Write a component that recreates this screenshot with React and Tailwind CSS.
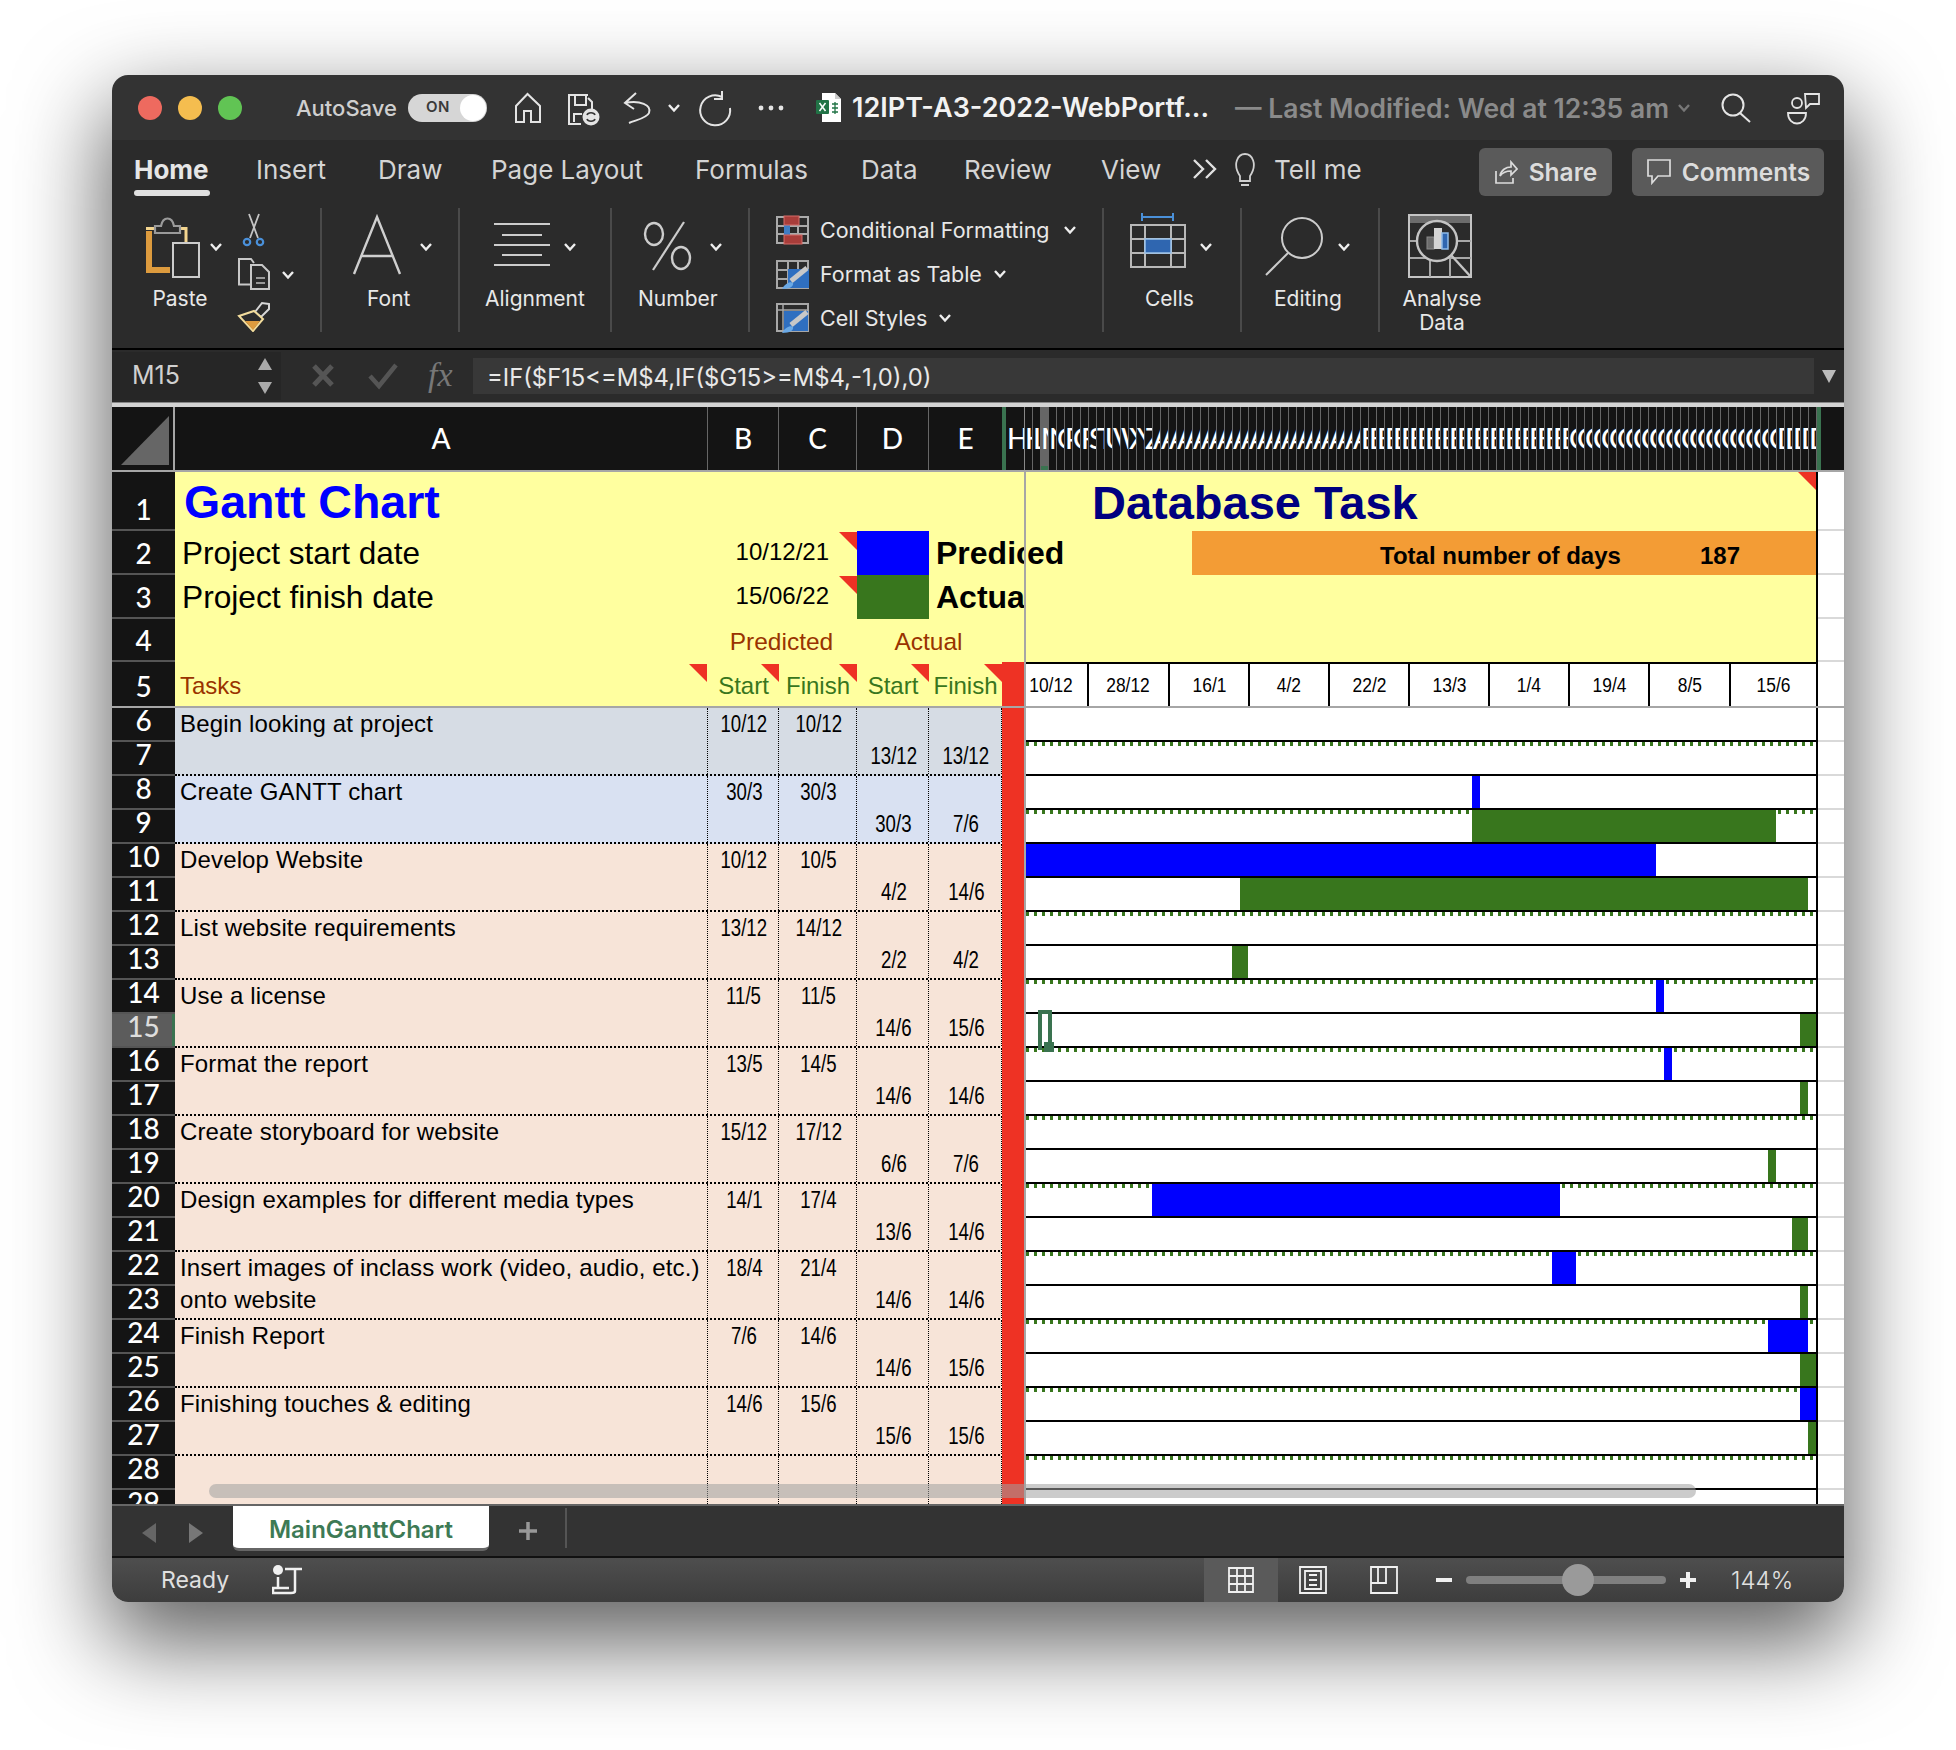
import React from "react";

const letters = "ABCDEFGHIJKLMNOPQRSTUVWXYZ".split("");
const gridCols = [
  ...letters.slice(10),
  ...letters.map((l) => "A" + l),
  ...letters.map((l) => "B" + l),
  ...letters.map((l) => "C" + l),
  "DA", "DB", "DC", "DD", "DE",
];

const B = "#0000ff";
const G = "#38761d";
const bars = {
  8: [B, 1472, 1480],
  9: [G, 1472, 1776],
  10: [B, 1026, 1656],
  11: [G, 1240, 1808],
  13: [G, 1232, 1248],
  14: [B, 1656, 1664],
  15: [G, 1800, 1816],
  16: [B, 1664, 1672],
  17: [G, 1800, 1808],
  19: [G, 1768, 1776],
  20: [B, 1152, 1560],
  21: [G, 1792, 1808],
  22: [B, 1552, 1576],
  23: [G, 1800, 1808],
  24: [B, 1768, 1808],
  25: [G, 1800, 1816],
  26: [B, 1800, 1816],
  27: [G, 1808, 1816],
};
const ticked = [7, 9, 12, 14, 16, 18, 20, 22, 24, 26, 28];

const tasks = [
  { r: 6, bg: "bg-[#d6dce4]", t: "Begin looking at project", v: ["10/12", "10/12", "13/12", "13/12"] },
  { r: 8, bg: "bg-[#d9e1f2]", t: "Create GANTT chart", v: ["30/3", "30/3", "30/3", "7/6"] },
  { r: 10, bg: "bg-[#f7e4d8]", t: "Develop Website", v: ["10/12", "10/5", "4/2", "14/6"] },
  { r: 12, bg: "bg-[#f7e4d8]", t: "List website requirements", v: ["13/12", "14/12", "2/2", "4/2"] },
  { r: 14, bg: "bg-[#f7e4d8]", t: "Use a license", v: ["11/5", "11/5", "14/6", "15/6"] },
  { r: 16, bg: "bg-[#f7e4d8]", t: "Format the report", v: ["13/5", "14/5", "14/6", "14/6"] },
  { r: 18, bg: "bg-[#f7e4d8]", t: "Create storyboard for website", v: ["15/12", "17/12", "6/6", "7/6"] },
  { r: 20, bg: "bg-[#f7e4d8]", t: "Design examples for different media types", v: ["14/1", "17/4", "13/6", "14/6"] },
  { r: 22, bg: "bg-[#f7e4d8]", t: "Insert images of inclass work (video, audio, etc.) onto website", v: ["18/4", "21/4", "14/6", "14/6"] },
  { r: 24, bg: "bg-[#f7e4d8]", t: "Finish Report", v: ["7/6", "14/6", "14/6", "15/6"] },
  { r: 26, bg: "bg-[#f7e4d8]", t: "Finishing touches & editing", v: ["14/6", "15/6", "15/6", "15/6"] },
  { r: 28, bg: "bg-[#f7e4d8]", t: "", v: ["", "", "", ""] },
];

const Chev = ({ x, y, c = "#eeeeee" }) => (
  <path d={`M${x - 5} ${y - 3}L${x} ${y + 2.5}L${x + 5} ${y - 3}`} fill="none" stroke={c} strokeWidth="2.4" />
);

function Note({ className = "" }) {
  return <div className={`absolute w-[18px] h-[18px] bg-[#ee3224] [clip-path:polygon(0_0,100%_0,100%_100%)] ${className}`} />;
}

function RowHead({ n, h = "h-[34px]" }) {
  const sel = n === 15;
  return (
    <div className={`${h} w-[63px] shrink-0 flex items-end justify-center border-b-2 border-[#555555] relative ${sel ? "bg-[#5c5c5c] text-[#dddddd]" : "bg-[#141414] text-white"}`}>
      <span className="font-['Lato',sans-serif] text-[28px] font-medium leading-[40px] h-[40px] shrink-0">{n}</span>
      {sel && <div className="absolute right-0 top-0 bottom-0 w-[3px] bg-[#3a7350]" />}
    </div>
  );
}

function ChartRow({ n }) {
  const b = bars[n];
  const tick = ticked.includes(n);
  return (
    <div className="flex h-[34px]">
      <div className={`w-[792px] h-full flex border-b-2 border-r-2 border-r-black border-b-black ${tick ? "bg-[linear-gradient(90deg,#38761d_40%,transparent_40%)] bg-[length:8px_4px] bg-repeat-x" : ""}`}>
        {b && <div className="h-full" style={{ marginLeft: b[1] - 1026, width: b[2] - b[1], backgroundColor: b[0] }} />}
      </div>
      <div className="w-[26px] h-full border-b-2 border-[#d9d9d9]" />
    </div>
  );
}

function Date1({ v, w, bottom }) {
  return (
    <div className={`${w} h-full flex justify-center pl-[2px] border-r border-dotted border-black ${bottom ? "items-end pb-[3px]" : "items-start pt-[1px]"}`}>
      <span className="inline-block text-[23px] leading-[30px] scale-x-[0.81] text-black whitespace-nowrap">{v}</span>
    </div>
  );
}

function TaskGroup({ g }) {
  return (
    <div className="flex h-[68px] shrink-0">
      <div className="flex flex-col">
        <RowHead n={g.r} />
        <RowHead n={g.r + 1} />
      </div>
      <div className={`flex w-[849px] h-[68px] ${g.bg} border-b-2 border-dotted border-black`}>
        <div className="w-[533px] h-full pl-[5px] pr-[4px] border-r border-dotted border-black text-[24px] leading-[32px] text-black tracking-[0.15px]">{g.t}</div>
        <Date1 v={g.v[0]} w="w-[71px]" />
        <Date1 v={g.v[1]} w="w-[78px]" />
        <Date1 v={g.v[2]} w="w-[72px]" bottom />
        <Date1 v={g.v[3]} w="w-[73px]" bottom />
        <div className="w-[22px] h-[68px] bg-[#ee3224]" />
      </div>
      <div className="w-[2px] h-full bg-[#a6a6a6]" />
      <div className="flex flex-col">
        <ChartRow n={g.r} />
        <ChartRow n={g.r + 1} />
      </div>
    </div>
  );
}

function TopRow({ n, h, headH, left, right }) {
  return (
    <div className={`flex ${h} shrink-0`}>
      <RowHead n={n} h={headH} />
      <div className="w-[849px] h-full flex bg-[#ffff9f] relative">{left}</div>
      <div className="w-[2px] h-full bg-[#a6a6a6]" />
      <div className="w-[792px] h-full bg-[#ffff9f] border-r-2 border-black flex relative">{right}</div>
      <div className="w-[26px] h-full bg-white border-b-2 border-[#d9d9d9]" />
    </div>
  );
}

const chartDates = [
  ["10/12", "w-[63px] justify-start"],
  ["28/12", "w-[81px] justify-center"],
  ["16/1", "w-[80px] justify-center"],
  ["4/2", "w-[80px] justify-center"],
  ["22/2", "w-[80px] justify-center"],
  ["13/3", "w-[80px] justify-center"],
  ["1/4", "w-[80px] justify-center"],
  ["19/4", "w-[80px] justify-center"],
  ["8/5", "w-[81px] justify-center"],
  ["15/6", "flex-1 justify-center"],
];

function Sheet() {
  return (
    <div className="relative h-[1097px] overflow-hidden bg-white flex flex-col font-['Liberation_Sans',Arial,sans-serif]">
      {/* column header */}
      <div className="flex h-[65px] shrink-0 bg-[#141414] border-b-2 border-[#a6a6a6] text-white font-['Lato',sans-serif] text-[28px] leading-[63px] font-medium">
        <div className="w-[63px] h-full relative border-r-2 border-[#a6a6a6]">
          <div className="absolute left-[9px] top-[9px] w-[48px] h-[49px] bg-[#666666] [clip-path:polygon(100%_0,100%_100%,0_100%)]" />
        </div>
        <div className="w-[533px] text-center border-r border-[#666666]">A</div>
        <div className="w-[71px] text-center border-r border-[#666666]">B</div>
        <div className="w-[78px] text-center border-r border-[#666666]">C</div>
        <div className="w-[72px] text-center border-r border-[#666666]">D</div>
        <div className="w-[73px] text-center">E</div>
        <div className="w-[22px] border-l-[4px] border-[#3a7350] pl-[1px] overflow-hidden leading-[63px]">H</div>
        <div className="flex h-[63px] border-l border-[#888888]">
          {gridCols.map((c) => (
            <div key={c} className={`relative w-[8px] h-full overflow-hidden whitespace-nowrap border-r border-[#666666] ${c === "M" ? "bg-[#666666]" : ""}`}>
              {c}
              {c === "M" && <div className="absolute left-0 right-0 bottom-0 h-[4px] bg-[#3a7350]" />}
            </div>
          ))}
        </div>
        <div className="w-[4px] h-[63px] bg-[#3a7350]" />
      </div>

      <TopRow
        n={1}
        h="h-[59px]"
        headH="h-[59px]"
        left={<div className="pl-[9px] text-[46.5px] font-bold leading-[61px] text-[#0000ff] whitespace-nowrap">Gantt Chart</div>}
        right={
          <>
            <div className="pl-[66px] text-[47px] font-bold leading-[61px] text-[#000080] whitespace-nowrap">Database Task</div>
            <Note className="right-0 top-0" />
          </>
        }
      />
      <TopRow
        n={2}
        h="h-[44px]"
        headH="h-[44px]"
        left={
          <>
            <div className="w-[533px] pl-[7px] text-[31.5px] leading-[44px] text-black whitespace-nowrap">Project start date</div>
            <div className="w-[149px] relative pr-[28px] text-right text-[24px] leading-[42px] text-black">
              10/12/21
              <Note className="right-0 top-[1px]" />
            </div>
            <div className="w-[72px] h-full bg-[#0000ff]" />
            <div className="w-[95px] pl-[7px] text-[32px] font-bold leading-[44px] text-black overflow-hidden whitespace-nowrap">Predicted</div>
          </>
        }
        right={
          <>
            <div className="w-[166px] pl-[1px] text-[32px] font-bold leading-[44px] text-black">ed</div>
            <div className="flex-1 h-full bg-[#f39c35] flex text-[24px] font-bold leading-[46px] pt-[2px] text-black">
              <div className="w-[320px] ml-[188px] whitespace-nowrap">Total number of days</div>
              <div>187</div>
            </div>
          </>
        }
      />
      <TopRow
        n={3}
        h="h-[44px]"
        headH="h-[44px]"
        left={
          <>
            <div className="w-[533px] pl-[7px] text-[31.7px] leading-[44px] text-black whitespace-nowrap">Project finish date</div>
            <div className="w-[149px] relative pr-[28px] text-right text-[24px] leading-[42px] text-black">
              15/06/22
              <Note className="right-0 top-[1px]" />
            </div>
            <div className="w-[72px] h-full bg-[#38761d]" />
            <div className="w-[95px] pl-[7px] text-[32px] font-bold leading-[44px] text-black overflow-hidden whitespace-nowrap">Actual</div>
          </>
        }
      />
      <TopRow
        n={4}
        h="h-[43px]"
        headH="h-[43px]"
        left={
          <div className="flex text-[24.5px] leading-[45px] text-[#993300] h-full">
            <div className="w-[533px]" />
            <div className="w-[147px] text-center">Predicted</div>
            <div className="w-[147px] text-center">Actual</div>
          </div>
        }
      />
      <div className="flex h-[46px] shrink-0 border-b-2 border-[#a6a6a6]">
        <div className="w-[63px] h-[44px] shrink-0 flex items-end justify-center bg-[#141414] text-white">
          <span className="font-['Lato',sans-serif] text-[28px] font-medium leading-[40px]">5</span>
        </div>
        <div className="w-[849px] h-[44px] flex bg-[#ffff9f] relative text-[24px] leading-[48px] text-[#38761d]">
          <div className="w-[533px] pl-[5px] relative text-[#993300]">
            Tasks
            <Note className="right-[1px] top-[2px]" />
          </div>
          <div className="w-[71px] relative text-center">
            Start
            <Note className="right-0 top-[2px]" />
          </div>
          <div className="w-[78px] relative text-center">
            Finish
            <Note className="right-0 top-[2px]" />
          </div>
          <div className="w-[72px] relative text-center">
            Start
            <Note className="right-0 top-[2px]" />
          </div>
          <div className="w-[73px] relative text-center whitespace-nowrap">
            Finish
            <Note className="right-0 top-[2px]" />
          </div>
          <div className="w-[22px] h-full bg-[#ee3224]" />
        </div>
        <div className="w-[2px] h-[44px] bg-[#a6a6a6]" />
        <div className="w-[792px] h-[44px] flex border-t-2 border-r-2 border-black bg-white text-[20px] leading-[42px] text-black">
          {chartDates.map(([d, c], i) => (
            <div key={d} className={`${c} h-full flex ${i < 9 ? "border-r-2 border-black" : ""}`}>
              <span className="inline-block scale-x-[0.87]">{d}</span>
            </div>
          ))}
        </div>
        <div className="w-[26px] h-[44px]" />
      </div>

      {tasks.map((g) => (
        <TaskGroup key={g.r} g={g} />
      ))}

      {/* selected cell M15 */}
      <div className="absolute left-[926px] top-[603px] w-[14px] h-[40px] border-t-4 border-l-4 border-r-4 border-[#3a7350]" />
      <div className="absolute left-[932px] top-[635px] w-[10px] h-[10px] bg-[#3a7350]" />
      {/* scrollbar */}
      <div className="absolute left-[97px] top-[1077px] w-[1487px] h-[14px] rounded-full bg-[rgba(160,160,160,0.55)]" />
    </div>
  );
}

function Ribbon() {
  const label = "text-[21px] leading-[24px] text-[#e8e8e8] whitespace-nowrap";
  const sep = "h-[124px] mt-[8px] border-r-2 border-[#4a4a4a] shrink-0";
  return (
    <div className="h-[148px] flex bg-[#2b2b2b]">
      {/* clipboard */}
      <div className={`${sep} w-[210px] flex pl-[26px]`}>
        <div className="w-[84px] flex flex-col items-center">
          <svg className="shrink-0 mb-[1px]" width="84" height="78" viewBox="138 208 84 78">
            <path d="M149 231V270H170" fill="none" stroke="#dd9b3e" strokeWidth="6" />
            <path d="M146 228.5H186V243" fill="none" stroke="#f4d58f" strokeWidth="3" />
            <path d="M155 233V226H161C163 216 172 216 174 226H180V233Z" fill="#2b2b2b" stroke="#9a9a9a" strokeWidth="2.2" />
            <rect x="173" y="243" width="26" height="34" fill="#2b2b2b" stroke="#cccccc" strokeWidth="2" />
            <Chev x={216} y={247} />
          </svg>
          <span className={label}>Paste</span>
        </div>
        <svg className="shrink-0" width="98" height="124" viewBox="222 208 98 124">
          <path d="M249 214L258 238M259 214L250 238" stroke="#c4c4c4" strokeWidth="1.8" fill="none" />
          <circle cx="247" cy="242" r="3.2" fill="none" stroke="#4a90d9" strokeWidth="2.2" />
          <circle cx="260" cy="242" r="3.2" fill="none" stroke="#4a90d9" strokeWidth="2.2" />
          <path d="M250 284.500H239V259H251L254 263" fill="none" stroke="#c8c8c8" strokeWidth="2" />
          <path d="M251 265H262L269 272V289H251Z" fill="none" stroke="#c8c8c8" strokeWidth="2" />
          <path d="M256 278H265M256 283H265" stroke="#999999" strokeWidth="1.8" />
          <Chev x={288} y={275} />
          <path d="M269 304L262 303L255 312L261 317L269 309Z" fill="none" stroke="#d8d8d8" strokeWidth="2" />
          <path d="M239 316L254 311L263 319L253 331Z" fill="#2b2b2b" stroke="#f2dc9c" strokeWidth="2" />
          <path d="M245 321L260 321L253 330Z" fill="#dd9b3e" />
        </svg>
      </div>
      {/* font */}
      <div className={`${sep} w-[138px] flex flex-col items-start`}>
        <svg className="shrink-0 mb-[1px]" width="136" height="78" viewBox="322 208 136 78">
          <path d="M354 274L377 217L400 274M362 256H392" fill="none" stroke="#cfcfcf" strokeWidth="2.4" />
          <Chev x={426} y={247} />
        </svg>
        <span className={`${label} pl-[45px]`}>Font</span>
      </div>
      {/* alignment */}
      <div className={`${sep} w-[152px] flex flex-col`}>
        <svg className="shrink-0 mb-[1px]" width="150" height="78" viewBox="460 208 150 78">
          <path d="M494 224H550M502 235H542M494 245H550M502 255H542M494 265H550" stroke="#cccccc" strokeWidth="2" fill="none" />
          <Chev x={570} y={247} />
        </svg>
        <span className={`${label} pl-[25px]`}>Alignment</span>
      </div>
      {/* number */}
      <div className={`${sep} w-[138px] flex flex-col`}>
        <svg className="shrink-0 mb-[1px]" width="136" height="78" viewBox="612 208 136 78">
          <ellipse cx="654" cy="234" rx="9" ry="11" fill="none" stroke="#cccccc" strokeWidth="2.4" />
          <ellipse cx="681" cy="258" rx="9" ry="11" fill="none" stroke="#cccccc" strokeWidth="2.4" />
          <path d="M684 222L653 270" stroke="#cccccc" strokeWidth="2.2" />
          <Chev x={716} y={247} />
        </svg>
        <span className={`${label} pl-[26px]`}>Number</span>
      </div>
      {/* styles */}
      <div className={`${sep} w-[354px] flex flex-col text-[21.5px] text-[#e8e8e8]`}>
        <div className="h-[44px] shrink-0 flex items-center pl-[26px] gap-[11px]">
          <svg className="shrink-0" width="33" height="30" viewBox="775 215 33 30">
            <path d="M776 217H807V243H776ZM787 217V243M797 217V243M776 226H807M776 234H807" fill="none" stroke="#aaaaaa" strokeWidth="2" />
            <rect x="783" y="232" width="6" height="4" fill="#3f6fb5" />
            <rect x="783" y="224" width="6" height="10" fill="#3f7dc4" />
            <rect x="783" y="216" width="15" height="9" fill="#a83d3a" stroke="#d56c68" />
            <rect x="783" y="235" width="18" height="9" fill="#a83d3a" stroke="#d56c68" />
          </svg>
          <span className="whitespace-nowrap">Conditional Formatting</span>
          <svg className="ml-[2px]" width="14" height="10" viewBox="1062 225 14 10"><Chev x={1069} y={230} /></svg>
        </div>
        <div className="h-[44px] shrink-0 flex items-center pl-[26px] gap-[11px]">
          <svg className="shrink-0" width="33" height="30" viewBox="775 259 33 30">
            <path d="M776 261H807V288H776ZM787 261V288M797 261V288M776 270H807M776 279H807" fill="none" stroke="#a8a8a8" strokeWidth="2" />
            <rect x="787" y="269" width="21" height="19" fill="#2f6fc0" />
            <path d="M806 268L790 281" stroke="#c8c8c8" strokeWidth="5" />
            <path d="M781 289C784 283 790 281 792 283C793 286 789 289 781 289Z" fill="#6aa9e6" />
          </svg>
          <span className="whitespace-nowrap">Format as Table</span>
          <svg width="14" height="10" viewBox="992 269 14 10"><Chev x={999} y={274} /></svg>
        </div>
        <div className="h-[44px] shrink-0 flex items-center pl-[26px] gap-[11px]">
          <svg className="shrink-0" width="33" height="30" viewBox="775 303 33 30">
            <path d="M776 304H807V331H776Z" fill="none" stroke="#a8a8a8" strokeWidth="2" />
            <path d="M776 310H807M782 304V331" stroke="#a8a8a8" strokeWidth="1.5" />
            <rect x="783" y="311" width="24" height="20" fill="#2f6fc0" />
            <path d="M806 312L790 325" stroke="#c8c8c8" strokeWidth="5" />
            <path d="M781 333C784 327 790 325 792 327C793 330 789 333 781 333Z" fill="#6aa9e6" />
          </svg>
          <span className="whitespace-nowrap">Cell Styles</span>
          <svg width="14" height="10" viewBox="938 313 14 10"><Chev x={945} y={318} /></svg>
        </div>
      </div>
      {/* cells */}
      <div className={`${sep} w-[138px] flex flex-col`}>
        <svg className="shrink-0 mb-[1px]" width="136" height="78" viewBox="1105 208 136 78">
          <path d="M1143 217H1174M1143 213V221M1174 213V221" stroke="#4a90d9" strokeWidth="2" fill="none" />
          <path d="M1132 225H1186V267H1132ZM1146 225V267M1172 225V267M1132 239H1186M1132 253H1186" fill="none" stroke="#b8b8b8" strokeWidth="2" />
          <rect x="1146" y="239" width="26" height="14" fill="#2f66b0" stroke="#9cc3ea" strokeWidth="1.5" />
          <Chev x={1207} y={247} />
        </svg>
        <span className={`${label} pl-[41px]`}>Cells</span>
      </div>
      {/* editing */}
      <div className={`${sep} w-[138px] flex flex-col`}>
        <svg className="shrink-0 mb-[1px]" width="136" height="78" viewBox="1243 208 136 78">
          <circle cx="1303" cy="238" r="20" fill="none" stroke="#cccccc" strokeWidth="2" />
          <path d="M1289 253L1267 275" stroke="#cccccc" strokeWidth="2" />
          <Chev x={1345} y={247} />
        </svg>
        <span className={`${label} pl-[32px]`}>Editing</span>
      </div>
      {/* analyse */}
      <div className="w-[130px] mt-[8px] flex flex-col">
        <svg className="shrink-0 mb-[1px]" width="130" height="78" viewBox="1381 208 130 78">
          <rect x="1410" y="215" width="62" height="62" fill="none" stroke="#c4c4c4" strokeWidth="2" />
          <rect x="1411" y="216" width="60" height="7" fill="#6c6c6c" />
          <path d="M1411 241H1472M1411 258H1472M1431 258V277M1451 258V277" stroke="#a8a8a8" strokeWidth="2" />
          <circle cx="1438" cy="241" r="20" fill="#2b2b2b" stroke="#c4c4c4" strokeWidth="2.4" />
          <rect x="1428" y="237" width="7" height="12" fill="#6c6c6c" stroke="#8a8a8a" />
          <rect x="1435" y="228" width="8" height="21" fill="#d4d4d4" />
          <rect x="1443" y="233" width="6" height="16" fill="#2f66b0" stroke="#8fbbe8" strokeWidth="1.5" />
          <path d="M1452 255L1472 277" stroke="#c4c4c4" strokeWidth="2.4" />
        </svg>
        <div className="w-[124px] text-center">
          <span className={`${label} block`}>Analyse</span>
          <span className={`${label} block`}>Data</span>
        </div>
      </div>
    </div>
  );
}

export default function App() {
  return (
    <div className="w-[1956px] h-[1750px] bg-white pt-[75px] pl-[112px] overflow-hidden font-['Inter',sans-serif]">
      <div className="w-[1732px] h-[1527px] rounded-[16px] overflow-hidden flex flex-col shadow-[0_36px_90px_6px_rgba(0,0,0,0.62)]">
        {/* title bar */}
        <div className="h-[65px] shrink-0 bg-[#333333] flex items-center pl-[26px] text-[#cfcfcf]">
          <div className="flex gap-[16px] shrink-0">
            <div className="w-[24px] h-[24px] rounded-full bg-[#ee6a5f]" />
            <div className="w-[24px] h-[24px] rounded-full bg-[#f5bd4f]" />
            <div className="w-[24px] h-[24px] rounded-full bg-[#61c454]" />
          </div>
          <span className="ml-[54px] w-[100px] pt-[2px] text-[22px] font-medium whitespace-nowrap">AutoSave</span>
          <div className="ml-[12px] w-[79px] h-[28px] rounded-full bg-[#d6d6d6] flex items-center justify-between pl-[18px] pr-[1px]">
            <span className="text-[15px] font-semibold text-[#3a3a3a] tracking-[0.5px]">ON</span>
            <div className="w-[26px] h-[26px] rounded-full bg-white" />
          </div>
          <svg className="ml-[18px] shrink-0" width="300" height="40" viewBox="505 88 300 40">
            <path d="M516 122V106L527.500 94L540 106V122H531V111H524V122Z" fill="none" stroke="#e4e4e4" strokeWidth="2" />
            <path d="M588 98L592 102V110M581 124H569V95H588M575 95V105H586V95M574 122V114H582" fill="none" stroke="#e4e4e4" strokeWidth="2" />
            <circle cx="591" cy="117" r="8.500" fill="#e4e4e4" />
            <path d="M587 115C588 112 594 112 595 115M595 119C594 122 588 122 587 119" fill="none" stroke="#333333" strokeWidth="1.600" />
            <path d="M636 93L625 103L634 109M625 103C640 100 652 105 649 113C647 118 636 120 629 123" fill="none" stroke="#e4e4e4" strokeWidth="2" />
            <Chev x={674} y={108} />
            <path d="M722 97A15 15 0 1 0 730 108M722 91V99H714" fill="none" stroke="#e4e4e4" strokeWidth="2" />
            <circle cx="761" cy="108" r="2.400" fill="#e4e4e4" />
            <circle cx="771" cy="108" r="2.400" fill="#e4e4e4" />
            <circle cx="781" cy="108" r="2.400" fill="#e4e4e4" />
          </svg>
          <svg className="ml-[11px] shrink-0" width="26" height="30" viewBox="816 93 26 30">
            <path d="M822 93H835L841 99V122H822Z" fill="#ffffff" />
            <path d="M835 93V99H841" fill="#cccccc" />
            <rect x="816" y="100" width="13" height="14" rx="1" fill="#217346" />
            <path d="M819.500 103L825.500 111M825.500 103L819.500 111" stroke="#ffffff" strokeWidth="1.500" />
            <path d="M832 104H838M832 108H838M832 112H838M835 102V114" stroke="#217346" strokeWidth="1.300" />
          </svg>
          <span className="ml-[10px] w-[383px] pt-[2px] text-[27px] font-semibold text-[#f2f2f2] whitespace-nowrap">12IPT-A3-2022-WebPortf...</span>
          <span className="w-[445px] pt-[2px] text-[26.5px] font-semibold text-[#8a8a8a] whitespace-nowrap">— Last Modified: Wed at 12:35 am</span>
          <svg className="shrink-0 -ml-[8px]" width="150" height="40" viewBox="1672 88 150 40">
            <Chev x={1684} y={108} c="#777777" />
            <circle cx="1733" cy="105" r="10.500" fill="none" stroke="#e4e4e4" strokeWidth="2" />
            <path d="M1740 113L1750 122" stroke="#e4e4e4" strokeWidth="2" />
            <path d="M1805 94H1819V104H1810L1806 108Z" fill="none" stroke="#e4e4e4" strokeWidth="1.800" />
            <circle cx="1797" cy="103" r="5" fill="none" stroke="#e4e4e4" strokeWidth="1.800" />
            <path d="M1788 113H1806C1806 127 1788 127 1788 113Z" fill="none" stroke="#e4e4e4" strokeWidth="1.800" />
          </svg>
        </div>

        {/* tabs */}
        <div className="h-[60px] shrink-0 bg-[#2b2b2b] flex items-start pl-[22px] pr-[20px] text-[26px] leading-[60px] text-[#d4d4d4]">
          <div className="w-[122px] relative font-bold text-[#e6e6e6]">
            Home
            <div className="absolute left-0 top-[50px] w-[76px] h-[6px] rounded-full bg-[#e0e0e0]" />
          </div>
          <div className="w-[122px]">Insert</div>
          <div className="w-[113px]">Draw</div>
          <div className="w-[204px]">Page Layout</div>
          <div className="w-[166px]">Formulas</div>
          <div className="w-[103px]">Data</div>
          <div className="w-[137px]">Review</div>
          <div className="w-[92px]">View</div>
          <svg className="mt-[18px]" width="41" height="24" viewBox="1193 157 41 24">
            <path d="M1194 159L1203 168L1194 177M1206 159L1215 168L1206 177" fill="none" stroke="#e0e0e0" strokeWidth="2.400" />
          </svg>
          <svg className="mt-[13px]" width="40" height="34" viewBox="1234 152 40 34">
            <path d="M1240 180V175C1232 163 1238 153 1245 153C1252 153 1258 163 1250 175V180Z" fill="none" stroke="#d0d0d0" strokeWidth="1.800" />
            <path d="M1241 184H1249" stroke="#d0d0d0" strokeWidth="2.200" />
          </svg>
          <div>Tell me</div>
          <div className="ml-auto mt-[8px] flex gap-[20px] text-[24.5px] leading-[50px] font-semibold text-[#dcdcdc]">
            <div className="w-[133px] h-[48px] rounded-[6px] bg-[#5a5a5a] flex items-center justify-center gap-[11px]">
              <svg width="24" height="26" viewBox="0 0 24 26">
                <path d="M2 12V24H19V19M6 17C7 11 12 8 17 8V3L23 10L17 16V12C12 12 9 13 6 17Z" fill="none" stroke="#dcdcdc" strokeWidth="1.700" />
              </svg>
              <span>Share</span>
            </div>
            <div className="w-[192px] h-[48px] rounded-[6px] bg-[#5a5a5a] flex items-center justify-center gap-[10px]">
              <svg width="26" height="28" viewBox="0 0 26 28">
                <path d="M2 2H24V18H12L6 25V18H2Z" fill="none" stroke="#dcdcdc" strokeWidth="1.700" />
              </svg>
              <span>Comments</span>
            </div>
          </div>
        </div>

        <Ribbon />

        <div className="h-[2px] shrink-0 bg-black" />

        {/* formula bar */}
        <div className="h-[52px] shrink-0 bg-[#2b2b2b] flex items-stretch text-[24px]">
          <div className="w-[169px] my-[2px] bg-[#262626] flex items-center pl-[20px] pr-[8px] justify-between text-[#d0d0d0]">
            <span className="text-[25px]">M15</span>
            <svg width="16" height="38" viewBox="0 0 16 38">
              <path d="M8 1L15 13H1Z" fill="#aaaaaa" />
              <path d="M8 37L15 25H1Z" fill="#aaaaaa" />
            </svg>
          </div>
          <svg className="shrink-0" width="192" height="52" viewBox="281 350 192 52">
            <path d="M314 366L332 385M332 366L314 385" stroke="#555555" strokeWidth="5" />
            <path d="M370 376L379 386L396 365" fill="none" stroke="#555555" strokeWidth="4.500" />
            <text x="428" y="386" fontFamily="'Liberation Serif',serif" fontStyle="italic" fontSize="34" fill="#777777">fx</text>
          </svg>
          <div className="my-[8px] w-[1341px] bg-[#383838] pl-[14px] text-[23.8px] leading-[39px] text-[#e8e8e8] whitespace-nowrap">
            =IF($F15&lt;=M$4,IF($G15&gt;=M$4,-1,0),0)
          </div>
          <svg className="ml-[8px] mt-[20px]" width="14" height="13" viewBox="0 0 14 13">
            <path d="M0 0H14L7 13Z" fill="#bbbbbb" />
          </svg>
        </div>

        <div className="h-[5px] shrink-0 bg-[#d4d4d4] border-t border-[#888888]" />

        <Sheet />

        {/* sheet tabs */}
        <div className="h-[52px] shrink-0 bg-[#333333] border-t-2 border-[#666666] flex items-start">
          <svg className="ml-[30px] mt-[17px] shrink-0" width="62" height="20" viewBox="142 1523 62 20">
            <path d="M156 1523V1543L142 1533Z" fill="#666666" />
            <path d="M189 1523V1543L203 1533Z" fill="#777777" />
          </svg>
          <div className="ml-[29px] w-[256px] h-[45px] bg-white rounded-b-[6px] border-b-[3px] border-[#666666] text-center text-[24px] font-semibold leading-[47px] text-[#3d7a55]">
            MainGanttChart
          </div>
          <svg className="ml-[28px] mt-[14px] shrink-0" width="22" height="22" viewBox="0 0 22 22">
            <path d="M11 2V20M2 11H20" stroke="#999999" strokeWidth="3.500" />
          </svg>
          <div className="ml-[26px] mt-[2px] w-[2px] h-[40px] bg-[#555555]" />
        </div>

        {/* status bar */}
        <div className="h-[46px] shrink-0 bg-[linear-gradient(#4e4e4e,#3d3d3d)] border-t-2 border-[#111111] flex items-center pl-[49px] text-[#e0e0e0]">
          <span className="w-[111px] pt-[1px] text-[23px] whitespace-nowrap">Ready</span>
          <svg className="shrink-0" width="32" height="30" viewBox="271 1564 32 30">
            <circle cx="277" cy="1569" r="5" fill="#f0f0f0" />
            <path d="M277 1576V1587M284 1568H301M294 1568V1590Q294 1592 290 1592H272V1587H288" fill="none" stroke="#f0f0f0" strokeWidth="2.500" />
          </svg>
          <div className="ml-[900px] w-[74px] h-[44px] bg-[#5a5a5a] flex items-center justify-center">
            <svg width="26" height="26" viewBox="0 0 26 26">
              <path d="M1 1H25V25H1ZM9 1V25M17 1V25M1 9H25M1 17H25" fill="none" stroke="#f0f0f0" strokeWidth="1.800" />
            </svg>
          </div>
          <svg className="ml-[21px] shrink-0" width="28" height="28" viewBox="0 0 28 28">
            <path d="M1 1H27V27H1ZM6 5H22V23H6ZM10 9H18M10 14H18M10 19H18" fill="none" stroke="#f0f0f0" strokeWidth="1.800" />
          </svg>
          <svg className="ml-[43px] shrink-0" width="28" height="28" viewBox="0 0 28 28">
            <path d="M1 1H27V27H1ZM1 17H16V1M8 1V17" fill="none" stroke="#f0f0f0" strokeWidth="1.800" />
          </svg>
          <svg className="ml-[38px] shrink-0" width="262" height="36" viewBox="1436 1561 262 36">
            <rect x="1436" y="1577" width="16" height="4" fill="#f0f0f0" />
            <rect x="1466" y="1575" width="200" height="8" rx="4" fill="#7f7f7f" />
            <ellipse cx="1578" cy="1579" rx="16" ry="16" fill="#9a9a9a" />
            <path d="M1688 1571V1587M1680 1579H1696" stroke="#f0f0f0" strokeWidth="4" />
          </svg>
          <span className="ml-[33px] pt-[1px] text-[24px] font-light text-[#e0e0e0]">144%</span>
        </div>
      </div>
    </div>
  );
}
